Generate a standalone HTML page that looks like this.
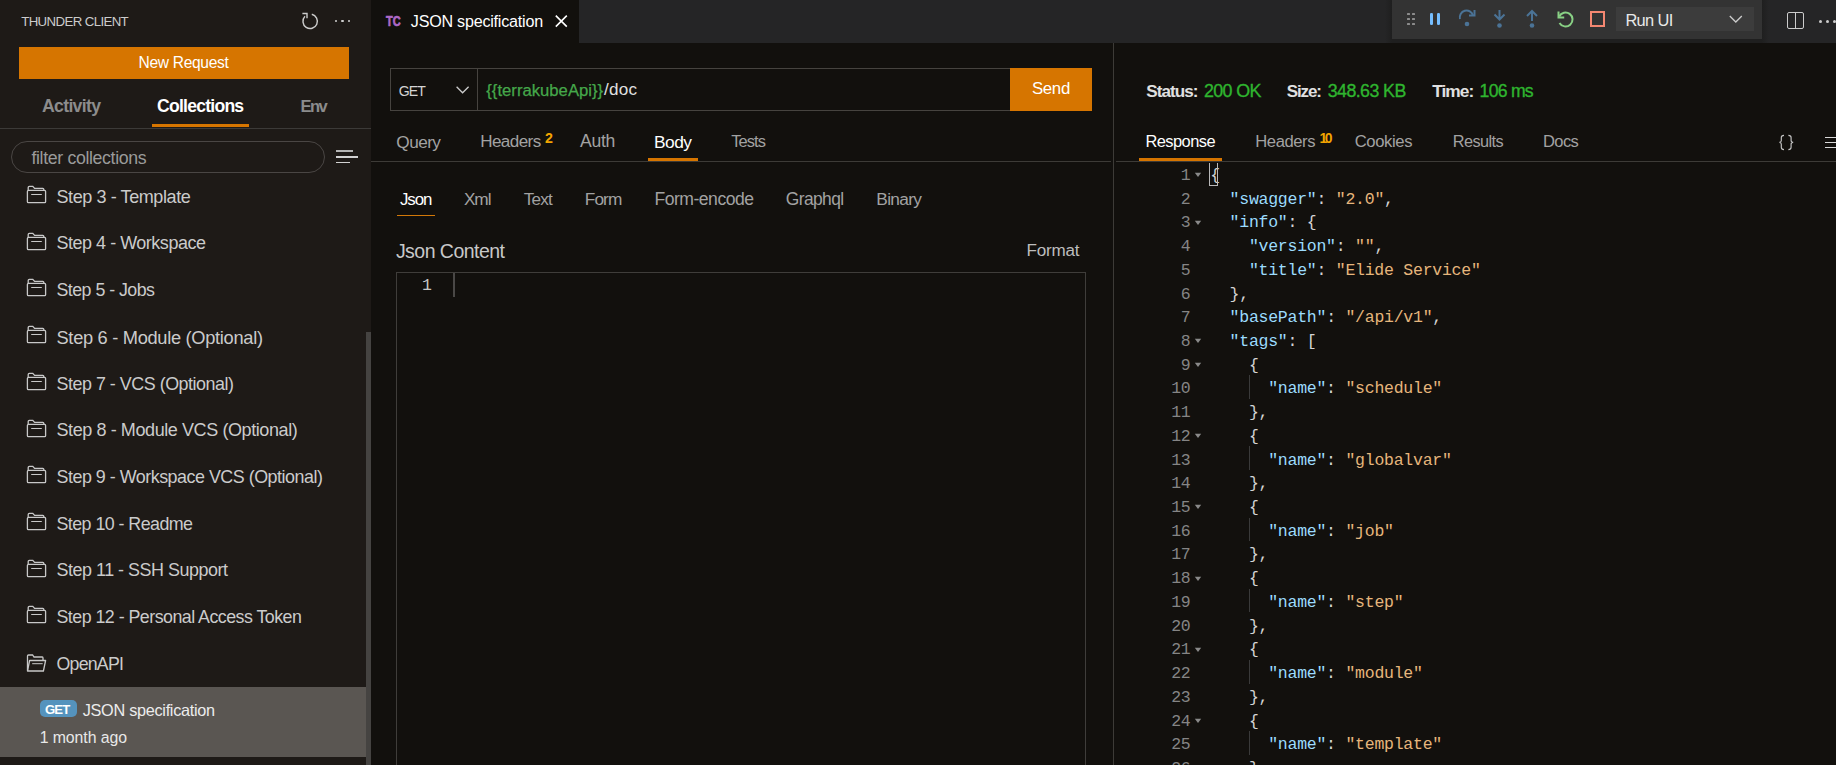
<!DOCTYPE html><html><head><meta charset="utf-8"><style>
html,body{margin:0;padding:0;width:1836px;height:765px;overflow:hidden;background:#12100d}
.t{position:absolute;white-space:pre;font-family:"Liberation Sans",sans-serif;line-height:normal}
.m{position:absolute;white-space:pre;font-family:"Liberation Mono",monospace}
.r{position:absolute;box-sizing:content-box}
</style></head><body>
<div class="r" style="left:0px;top:0px;width:371px;height:765px;background:#1e1a17;"></div>
<div class="r" style="left:371px;top:0px;width:1465px;height:765px;background:#12100d;"></div>
<div class="r" style="left:579px;top:0px;width:1257px;height:43px;background:#252526;"></div>
<div class="t" style="left:21.20px;top:13.89px;font-size:13.27px;letter-spacing:-0.629px;color:#cccccc;font-weight:400;">THUNDER CLIENT</div>
<div class="r" style="left:19px;top:47px;width:330px;height:32px;background:#d67500;"></div>
<div class="t" style="left:138.60px;top:54.00px;font-size:15.58px;letter-spacing:-0.333px;color:#ffffff;font-weight:400;">New Request</div>
<div class="t" style="left:42.00px;top:95.99px;font-size:17.69px;letter-spacing:-0.698px;color:#8c8c8c;font-weight:700;">Activity</div>
<div class="t" style="left:157.10px;top:95.97px;font-size:17.60px;letter-spacing:-0.776px;color:#ffffff;font-weight:700;">Collections</div>
<div class="t" style="left:300.50px;top:97.02px;font-size:16.55px;letter-spacing:-1.524px;color:#8c8c8c;font-weight:700;">Env</div>
<div class="r" style="left:152px;top:124px;width:97px;height:3px;background:#d67500;"></div>
<div class="r" style="left:0px;top:128px;width:371px;height:1px;background:#3c3a38;"></div>
<div class="r" style="left:11px;top:141px;width:312px;height:30px;border:1px solid #4a4644;border-radius:16px"></div>
<div class="t" style="left:31.40px;top:147.75px;font-size:17.74px;letter-spacing:-0.349px;color:#9a9a9a;font-weight:400;">filter collections</div>
<div class="r" style="left:336.2px;top:150px;width:16.8px;height:2px;background:#b4b4b4"></div>
<div class="r" style="left:336.2px;top:156.2px;width:21.6px;height:1.7px;background:#d2d2d2"></div>
<div class="r" style="left:336.2px;top:161.7px;width:13.8px;height:1.7px;background:#d2d2d2"></div>
<div class="t" style="left:56.50px;top:186.68px;font-size:18.04px;letter-spacing:-0.420px;color:#cbcbcb;font-weight:400;">Step 3 - Template</div>
<svg class="r" style="left:20px;top:180.00px" width="36" height="30" viewBox="0 0 36 30"><path d="M8.2 10 V7.5 Q8.2 6.4 9.3 6.4 H12.8 L14.6 8.4 H22.8 Q23.8 8.4 23.8 9.6 V10" fill="none" stroke="#c8c8c8" stroke-width="1.3"/><rect x="7.4" y="10.4" width="18.2" height="12.3" rx="1" fill="none" stroke="#c8c8c8" stroke-width="1.3"/><path d="M11.2 14.5 H21.8" stroke="#c8c8c8" stroke-width="1"/></svg>
<div class="t" style="left:56.50px;top:233.43px;font-size:17.98px;letter-spacing:-0.473px;color:#cbcbcb;font-weight:400;">Step 4 - Workspace</div>
<svg class="r" style="left:20px;top:226.70px" width="36" height="30" viewBox="0 0 36 30"><path d="M8.2 10 V7.5 Q8.2 6.4 9.3 6.4 H12.8 L14.6 8.4 H22.8 Q23.8 8.4 23.8 9.6 V10" fill="none" stroke="#c8c8c8" stroke-width="1.3"/><rect x="7.4" y="10.4" width="18.2" height="12.3" rx="1" fill="none" stroke="#c8c8c8" stroke-width="1.3"/><path d="M11.2 14.5 H21.8" stroke="#c8c8c8" stroke-width="1"/></svg>
<div class="t" style="left:56.50px;top:280.29px;font-size:17.81px;letter-spacing:-0.535px;color:#cbcbcb;font-weight:400;">Step 5 - Jobs</div>
<svg class="r" style="left:20px;top:273.40px" width="36" height="30" viewBox="0 0 36 30"><path d="M8.2 10 V7.5 Q8.2 6.4 9.3 6.4 H12.8 L14.6 8.4 H22.8 Q23.8 8.4 23.8 9.6 V10" fill="none" stroke="#c8c8c8" stroke-width="1.3"/><rect x="7.4" y="10.4" width="18.2" height="12.3" rx="1" fill="none" stroke="#c8c8c8" stroke-width="1.3"/><path d="M11.2 14.5 H21.8" stroke="#c8c8c8" stroke-width="1"/></svg>
<div class="t" style="left:56.50px;top:326.58px;font-size:18.25px;letter-spacing:-0.302px;color:#cbcbcb;font-weight:400;">Step 6 - Module (Optional)</div>
<svg class="r" style="left:20px;top:320.10px" width="36" height="30" viewBox="0 0 36 30"><path d="M8.2 10 V7.5 Q8.2 6.4 9.3 6.4 H12.8 L14.6 8.4 H22.8 Q23.8 8.4 23.8 9.6 V10" fill="none" stroke="#c8c8c8" stroke-width="1.3"/><rect x="7.4" y="10.4" width="18.2" height="12.3" rx="1" fill="none" stroke="#c8c8c8" stroke-width="1.3"/><path d="M11.2 14.5 H21.8" stroke="#c8c8c8" stroke-width="1"/></svg>
<div class="t" style="left:56.50px;top:373.60px;font-size:17.90px;letter-spacing:-0.477px;color:#cbcbcb;font-weight:400;">Step 7 - VCS (Optional)</div>
<svg class="r" style="left:20px;top:366.80px" width="36" height="30" viewBox="0 0 36 30"><path d="M8.2 10 V7.5 Q8.2 6.4 9.3 6.4 H12.8 L14.6 8.4 H22.8 Q23.8 8.4 23.8 9.6 V10" fill="none" stroke="#c8c8c8" stroke-width="1.3"/><rect x="7.4" y="10.4" width="18.2" height="12.3" rx="1" fill="none" stroke="#c8c8c8" stroke-width="1.3"/><path d="M11.2 14.5 H21.8" stroke="#c8c8c8" stroke-width="1"/></svg>
<div class="t" style="left:56.50px;top:420.18px;font-size:18.03px;letter-spacing:-0.417px;color:#cbcbcb;font-weight:400;">Step 8 - Module VCS (Optional)</div>
<svg class="r" style="left:20px;top:413.50px" width="36" height="30" viewBox="0 0 36 30"><path d="M8.2 10 V7.5 Q8.2 6.4 9.3 6.4 H12.8 L14.6 8.4 H22.8 Q23.8 8.4 23.8 9.6 V10" fill="none" stroke="#c8c8c8" stroke-width="1.3"/><rect x="7.4" y="10.4" width="18.2" height="12.3" rx="1" fill="none" stroke="#c8c8c8" stroke-width="1.3"/><path d="M11.2 14.5 H21.8" stroke="#c8c8c8" stroke-width="1"/></svg>
<div class="t" style="left:56.50px;top:467.00px;font-size:17.90px;letter-spacing:-0.491px;color:#cbcbcb;font-weight:400;">Step 9 - Workspace VCS (Optional)</div>
<svg class="r" style="left:20px;top:460.20px" width="36" height="30" viewBox="0 0 36 30"><path d="M8.2 10 V7.5 Q8.2 6.4 9.3 6.4 H12.8 L14.6 8.4 H22.8 Q23.8 8.4 23.8 9.6 V10" fill="none" stroke="#c8c8c8" stroke-width="1.3"/><rect x="7.4" y="10.4" width="18.2" height="12.3" rx="1" fill="none" stroke="#c8c8c8" stroke-width="1.3"/><path d="M11.2 14.5 H21.8" stroke="#c8c8c8" stroke-width="1"/></svg>
<div class="t" style="left:56.50px;top:513.74px;font-size:17.86px;letter-spacing:-0.562px;color:#cbcbcb;font-weight:400;">Step 10 - Readme</div>
<svg class="r" style="left:20px;top:506.90px" width="36" height="30" viewBox="0 0 36 30"><path d="M8.2 10 V7.5 Q8.2 6.4 9.3 6.4 H12.8 L14.6 8.4 H22.8 Q23.8 8.4 23.8 9.6 V10" fill="none" stroke="#c8c8c8" stroke-width="1.3"/><rect x="7.4" y="10.4" width="18.2" height="12.3" rx="1" fill="none" stroke="#c8c8c8" stroke-width="1.3"/><path d="M11.2 14.5 H21.8" stroke="#c8c8c8" stroke-width="1"/></svg>
<div class="t" style="left:56.50px;top:560.36px;font-size:17.94px;letter-spacing:-0.483px;color:#cbcbcb;font-weight:400;">Step 11 - SSH Support</div>
<svg class="r" style="left:20px;top:553.60px" width="36" height="30" viewBox="0 0 36 30"><path d="M8.2 10 V7.5 Q8.2 6.4 9.3 6.4 H12.8 L14.6 8.4 H22.8 Q23.8 8.4 23.8 9.6 V10" fill="none" stroke="#c8c8c8" stroke-width="1.3"/><rect x="7.4" y="10.4" width="18.2" height="12.3" rx="1" fill="none" stroke="#c8c8c8" stroke-width="1.3"/><path d="M11.2 14.5 H21.8" stroke="#c8c8c8" stroke-width="1"/></svg>
<div class="t" style="left:56.50px;top:607.17px;font-size:17.82px;letter-spacing:-0.524px;color:#cbcbcb;font-weight:400;">Step 12 - Personal Access Token</div>
<svg class="r" style="left:20px;top:600.30px" width="36" height="30" viewBox="0 0 36 30"><path d="M8.2 10 V7.5 Q8.2 6.4 9.3 6.4 H12.8 L14.6 8.4 H22.8 Q23.8 8.4 23.8 9.6 V10" fill="none" stroke="#c8c8c8" stroke-width="1.3"/><rect x="7.4" y="10.4" width="18.2" height="12.3" rx="1" fill="none" stroke="#c8c8c8" stroke-width="1.3"/><path d="M11.2 14.5 H21.8" stroke="#c8c8c8" stroke-width="1"/></svg>
<div class="t" style="left:56.50px;top:653.92px;font-size:17.76px;letter-spacing:-0.765px;color:#cbcbcb;font-weight:400;">OpenAPI</div>
<svg class="r" style="left:20px;top:647.00px" width="36" height="30" viewBox="0 0 36 30"><path d="M7.5 23.5 V9 Q7.5 8 8.5 8 H12.6 L14 10 H22.3 Q23 10 23 11 V13.5" fill="none" stroke="#c8c8c8" stroke-width="1.3"/><path d="M9.6 13.5 H25.6 L23.4 24 H7.5 Z" fill="none" stroke="#c8c8c8" stroke-width="1.3" stroke-linejoin="round"/><path d="M12.2 16.7 H22.7" stroke="#c8c8c8" stroke-width="1"/></svg>
<div class="r" style="left:366px;top:332px;width:5px;height:433px;background:#454341;"></div>
<div class="r" style="left:0px;top:687px;width:366px;height:70px;background:#5a5652;"></div>
<div class="r" style="left:40px;top:700px;width:37px;height:17px;background:#5593bd;border-radius:5px"></div>
<div class="t" style="left:45.00px;top:702.02px;font-size:13.13px;letter-spacing:-0.847px;color:#ffffff;font-weight:700;">GET</div>
<div class="t" style="left:82.70px;top:700.57px;font-size:16.27px;letter-spacing:-0.292px;color:#ececec;font-weight:400;">JSON specification</div>
<div class="t" style="left:39.70px;top:729.25px;font-size:15.85px;letter-spacing:-0.075px;color:#e8e8e8;font-weight:400;">1 month ago</div>
<div class="t" style="left:410.80px;top:12.21px;font-size:16.12px;letter-spacing:-0.223px;color:#ffffff;font-weight:400;">JSON specification</div>
<div class="t" style="left:386px;top:11.8px;font-size:15.3px;font-weight:700;color:#ad68c6;transform:scaleX(0.72);transform-origin:left top;letter-spacing:0px;-webkit-text-stroke:0.7px #ad68c6">TC</div>
<svg class="r" style="left:550px;top:10px" width="24" height="22" viewBox="0 0 24 22"><path d="M5.8 5.6 L16.8 16.6 M16.8 5.6 L5.8 16.6" stroke="#ffffff" stroke-width="1.6"/></svg>
<div class="r" style="left:390px;top:68px;width:619px;height:41px;border:1px solid #46433f;border-right:none"></div>
<div class="r" style="left:477px;top:69px;width:1px;height:41px;background:#46433f;"></div>
<div class="t" style="left:398.80px;top:82.74px;font-size:14.10px;letter-spacing:-0.895px;color:#d4d4d4;font-weight:400;">GET</div>
<svg class="r" style="left:452px;top:82px" width="20" height="16" viewBox="0 0 20 16"><path d="M4.6 4.8 L10.6 10.8 L16.6 4.8" fill="none" stroke="#cccccc" stroke-width="1.3"/></svg>
<div class="t" style="left:486.30px;top:80.68px;font-size:16.71px;letter-spacing:-0.004px;color:#45a84a;font-weight:400;-webkit-text-stroke:0.25px #45a84a">{{terrakubeApi}}</div>
<div class="t" style="left:604.00px;top:80.34px;font-size:17.09px;letter-spacing:0.235px;color:#e0e0e0;font-weight:400;">/doc</div>
<div class="r" style="left:1010px;top:68px;width:82px;height:43px;background:#d67500;"></div>
<div class="t" style="left:1031.90px;top:78.63px;font-size:16.87px;letter-spacing:-0.331px;color:#ffffff;font-weight:400;">Send</div>
<div class="r" style="left:1113px;top:43px;width:1px;height:722px;background:#3d3b37;"></div>
<div class="t" style="left:396.30px;top:131.62px;font-size:17.22px;letter-spacing:-0.547px;color:#a2a2a2;font-weight:400;">Query</div>
<div class="t" style="left:480.20px;top:131.74px;font-size:17.08px;letter-spacing:-0.594px;color:#a2a2a2;font-weight:400;">Headers</div>
<div class="t" style="left:580.00px;top:131.28px;font-size:17.59px;letter-spacing:-0.296px;color:#a2a2a2;font-weight:400;">Auth</div>
<div class="t" style="left:654.00px;top:131.50px;font-size:17.35px;letter-spacing:-0.512px;color:#ffffff;font-weight:400;">Body</div>
<div class="t" style="left:731.20px;top:132.30px;font-size:16.47px;letter-spacing:-0.908px;color:#a2a2a2;font-weight:400;">Tests</div>
<div class="t" style="left:545.00px;top:130.04px;font-size:14.21px;letter-spacing:-0.400px;color:#f2a500;font-weight:700;">2</div>
<div class="r" style="left:648px;top:158px;width:50px;height:3px;background:#d67500;"></div>
<div class="r" style="left:371px;top:161px;width:740px;height:1px;background:#3d3b37;"></div>
<div class="t" style="left:400.00px;top:189.73px;font-size:16.88px;letter-spacing:-1.114px;color:#ffffff;font-weight:400;">Json</div>
<div class="t" style="left:463.90px;top:189.39px;font-size:17.24px;letter-spacing:-1.047px;color:#a2a2a2;font-weight:400;">Xml</div>
<div class="t" style="left:523.80px;top:189.49px;font-size:17.14px;letter-spacing:-0.809px;color:#a2a2a2;font-weight:400;">Text</div>
<div class="t" style="left:584.80px;top:189.37px;font-size:17.27px;letter-spacing:-0.928px;color:#a2a2a2;font-weight:400;">Form</div>
<div class="t" style="left:654.50px;top:189.08px;font-size:17.60px;letter-spacing:-0.514px;color:#a2a2a2;font-weight:400;">Form-encode</div>
<div class="t" style="left:785.70px;top:189.19px;font-size:17.46px;letter-spacing:-0.590px;color:#a2a2a2;font-weight:400;">Graphql</div>
<div class="t" style="left:876.30px;top:189.35px;font-size:17.29px;letter-spacing:-0.663px;color:#a2a2a2;font-weight:400;">Binary</div>
<div class="r" style="left:397px;top:214.6px;width:38px;height:1.7px;background:#d27808"></div>
<div class="t" style="left:395.90px;top:239.55px;font-size:19.50px;letter-spacing:-0.531px;color:#c8c8c8;font-weight:400;">Json Content</div>
<div class="t" style="left:1026.50px;top:240.53px;font-size:17.09px;letter-spacing:-0.224px;color:#bdbdbd;font-weight:400;">Format</div>
<div class="r" style="left:396px;top:272px;width:688px;height:500px;border:1px solid #3f3d3a"></div>
<div class="m" style="left:422px;top:276.4px;font-size:16.5px;color:#c6c6c6">1</div>
<div class="r" style="left:453px;top:273px;width:2px;height:24px;background:#4a4846;"></div>
<div class="t" style="left:1146.30px;top:81.53px;font-size:17.09px;letter-spacing:-0.937px;color:#e0e0e0;font-weight:700;">Status:</div>
<div class="t" style="left:1203.90px;top:80.82px;font-size:17.88px;letter-spacing:-0.588px;color:#2fb52f;font-weight:400;-webkit-text-stroke:0.35px #2fb52f">200 OK</div>
<div class="t" style="left:1286.70px;top:81.67px;font-size:16.94px;letter-spacing:-1.058px;color:#e0e0e0;font-weight:700;">Size:</div>
<div class="t" style="left:1327.80px;top:80.91px;font-size:17.78px;letter-spacing:-0.566px;color:#2fb52f;font-weight:400;-webkit-text-stroke:0.35px #2fb52f">348.63 KB</div>
<div class="t" style="left:1432.20px;top:81.32px;font-size:17.32px;letter-spacing:-0.946px;color:#e0e0e0;font-weight:700;">Time:</div>
<div class="t" style="left:1479.60px;top:81.05px;font-size:17.62px;letter-spacing:-0.738px;color:#2fb52f;font-weight:400;-webkit-text-stroke:0.35px #2fb52f">106 ms</div>
<div class="t" style="left:1145.40px;top:132.02px;font-size:16.44px;letter-spacing:-0.549px;color:#ffffff;font-weight:400;">Response</div>
<div class="t" style="left:1255.30px;top:131.87px;font-size:16.61px;letter-spacing:-0.432px;color:#a2a2a2;font-weight:400;">Headers</div>
<div class="t" style="left:1354.70px;top:131.83px;font-size:16.65px;letter-spacing:-0.391px;color:#a2a2a2;font-weight:400;">Cookies</div>
<div class="t" style="left:1452.70px;top:132.15px;font-size:16.30px;letter-spacing:-0.556px;color:#a2a2a2;font-weight:400;">Results</div>
<div class="t" style="left:1543.00px;top:131.96px;font-size:16.51px;letter-spacing:-0.600px;color:#a2a2a2;font-weight:400;">Docs</div>
<div class="t" style="left:1319.40px;top:130.45px;font-size:13.87px;letter-spacing:-2.321px;color:#f2a500;font-weight:700;">10</div>
<div class="r" style="left:1139px;top:158px;width:83px;height:3px;background:#d67500;"></div>
<div class="r" style="left:1116px;top:161px;width:720px;height:1px;background:#3d3b37;"></div>
<svg class="r" style="left:1776px;top:132px" width="22" height="20" viewBox="1776 132 22 20"><path d="M1784 135.3 Q1781.3 135.3 1781.3 137.6 V140.6 Q1781.3 142.4 1779.4 142.4 Q1781.3 142.4 1781.3 144.2 V147.3 Q1781.3 149.6 1784 149.6 M1788.4 135.3 Q1791.1 135.3 1791.1 137.6 V140.6 Q1791.1 142.4 1793.2 142.4 Q1791.1 142.4 1791.1 144.2 V147.3 Q1791.1 149.6 1788.4 149.6" fill="none" stroke="#c4c4c4" stroke-width="1.15"/></svg>
<div class="r" style="left:1825px;top:137px;width:11px;height:1px;background:#d8d8d8;"></div>
<div class="r" style="left:1825px;top:142px;width:11px;height:1px;background:#d8d8d8;"></div>
<div class="r" style="left:1825px;top:147px;width:11px;height:1px;background:#d8d8d8;"></div>
<div class="m" style="left:1100px;width:90.5px;text-align:right;top:165.96px;font-size:16.5px;letter-spacing:-0.25px;color:#858585">1</div>
<svg class="r" style="left:1194px;top:172.40px" width="8" height="6" viewBox="0 0 8 6"><path d="M0.8 0.8 H7.2 L4 5 Z" fill="#8a8a8a"/></svg>
<div class="m" style="left:1210.30px;top:165.96px;font-size:16.5px;letter-spacing:-0.25px"><span style="color:#d4d4d4">{</span></div>
<div class="m" style="left:1100px;width:90.5px;text-align:right;top:189.68px;font-size:16.5px;letter-spacing:-0.25px;color:#858585">2</div>
<div class="m" style="left:1229.60px;top:189.68px;font-size:16.5px;letter-spacing:-0.25px"><span style="color:#9cdcfe">&quot;swagger&quot;</span><span style="color:#d4d4d4">: </span><span style="color:#e6b67c">&quot;2.0&quot;</span><span style="color:#d4d4d4">,</span></div>
<div class="m" style="left:1100px;width:90.5px;text-align:right;top:213.40px;font-size:16.5px;letter-spacing:-0.25px;color:#858585">3</div>
<svg class="r" style="left:1194px;top:219.84px" width="8" height="6" viewBox="0 0 8 6"><path d="M0.8 0.8 H7.2 L4 5 Z" fill="#8a8a8a"/></svg>
<div class="m" style="left:1229.60px;top:213.40px;font-size:16.5px;letter-spacing:-0.25px"><span style="color:#9cdcfe">&quot;info&quot;</span><span style="color:#d4d4d4">: </span><span style="color:#d4d4d4">{</span></div>
<div class="m" style="left:1100px;width:90.5px;text-align:right;top:237.12px;font-size:16.5px;letter-spacing:-0.25px;color:#858585">4</div>
<div class="m" style="left:1248.90px;top:237.12px;font-size:16.5px;letter-spacing:-0.25px"><span style="color:#9cdcfe">&quot;version&quot;</span><span style="color:#d4d4d4">: </span><span style="color:#e6b67c">&quot;&quot;</span><span style="color:#d4d4d4">,</span></div>
<div class="m" style="left:1100px;width:90.5px;text-align:right;top:260.84px;font-size:16.5px;letter-spacing:-0.25px;color:#858585">5</div>
<div class="m" style="left:1248.90px;top:260.84px;font-size:16.5px;letter-spacing:-0.25px"><span style="color:#9cdcfe">&quot;title&quot;</span><span style="color:#d4d4d4">: </span><span style="color:#e6b67c">&quot;Elide Service&quot;</span><span style="color:#d4d4d4"></span></div>
<div class="m" style="left:1100px;width:90.5px;text-align:right;top:284.56px;font-size:16.5px;letter-spacing:-0.25px;color:#858585">6</div>
<div class="m" style="left:1229.60px;top:284.56px;font-size:16.5px;letter-spacing:-0.25px"><span style="color:#d4d4d4">},</span></div>
<div class="m" style="left:1100px;width:90.5px;text-align:right;top:308.28px;font-size:16.5px;letter-spacing:-0.25px;color:#858585">7</div>
<div class="m" style="left:1229.60px;top:308.28px;font-size:16.5px;letter-spacing:-0.25px"><span style="color:#9cdcfe">&quot;basePath&quot;</span><span style="color:#d4d4d4">: </span><span style="color:#e6b67c">&quot;/api/v1&quot;</span><span style="color:#d4d4d4">,</span></div>
<div class="m" style="left:1100px;width:90.5px;text-align:right;top:332.00px;font-size:16.5px;letter-spacing:-0.25px;color:#858585">8</div>
<svg class="r" style="left:1194px;top:338.44px" width="8" height="6" viewBox="0 0 8 6"><path d="M0.8 0.8 H7.2 L4 5 Z" fill="#8a8a8a"/></svg>
<div class="m" style="left:1229.60px;top:332.00px;font-size:16.5px;letter-spacing:-0.25px"><span style="color:#9cdcfe">&quot;tags&quot;</span><span style="color:#d4d4d4">: </span><span style="color:#d4d4d4">[</span></div>
<div class="m" style="left:1100px;width:90.5px;text-align:right;top:355.72px;font-size:16.5px;letter-spacing:-0.25px;color:#858585">9</div>
<svg class="r" style="left:1194px;top:362.16px" width="8" height="6" viewBox="0 0 8 6"><path d="M0.8 0.8 H7.2 L4 5 Z" fill="#8a8a8a"/></svg>
<div class="m" style="left:1248.90px;top:355.72px;font-size:16.5px;letter-spacing:-0.25px"><span style="color:#d4d4d4">{</span></div>
<div class="m" style="left:1100px;width:90.5px;text-align:right;top:379.44px;font-size:16.5px;letter-spacing:-0.25px;color:#858585">10</div>
<div class="r" style="left:1249px;top:375px;width:1px;height:24px;background:#3a3a3a;"></div>
<div class="m" style="left:1268.20px;top:379.44px;font-size:16.5px;letter-spacing:-0.25px"><span style="color:#9cdcfe">&quot;name&quot;</span><span style="color:#d4d4d4">: </span><span style="color:#e6b67c">&quot;schedule&quot;</span><span style="color:#d4d4d4"></span></div>
<div class="m" style="left:1100px;width:90.5px;text-align:right;top:403.16px;font-size:16.5px;letter-spacing:-0.25px;color:#858585">11</div>
<div class="m" style="left:1248.90px;top:403.16px;font-size:16.5px;letter-spacing:-0.25px"><span style="color:#d4d4d4">},</span></div>
<div class="m" style="left:1100px;width:90.5px;text-align:right;top:426.88px;font-size:16.5px;letter-spacing:-0.25px;color:#858585">12</div>
<svg class="r" style="left:1194px;top:433.32px" width="8" height="6" viewBox="0 0 8 6"><path d="M0.8 0.8 H7.2 L4 5 Z" fill="#8a8a8a"/></svg>
<div class="m" style="left:1248.90px;top:426.88px;font-size:16.5px;letter-spacing:-0.25px"><span style="color:#d4d4d4">{</span></div>
<div class="m" style="left:1100px;width:90.5px;text-align:right;top:450.60px;font-size:16.5px;letter-spacing:-0.25px;color:#858585">13</div>
<div class="r" style="left:1249px;top:446px;width:1px;height:24px;background:#3a3a3a;"></div>
<div class="m" style="left:1268.20px;top:450.60px;font-size:16.5px;letter-spacing:-0.25px"><span style="color:#9cdcfe">&quot;name&quot;</span><span style="color:#d4d4d4">: </span><span style="color:#e6b67c">&quot;globalvar&quot;</span><span style="color:#d4d4d4"></span></div>
<div class="m" style="left:1100px;width:90.5px;text-align:right;top:474.32px;font-size:16.5px;letter-spacing:-0.25px;color:#858585">14</div>
<div class="m" style="left:1248.90px;top:474.32px;font-size:16.5px;letter-spacing:-0.25px"><span style="color:#d4d4d4">},</span></div>
<div class="m" style="left:1100px;width:90.5px;text-align:right;top:498.04px;font-size:16.5px;letter-spacing:-0.25px;color:#858585">15</div>
<svg class="r" style="left:1194px;top:504.48px" width="8" height="6" viewBox="0 0 8 6"><path d="M0.8 0.8 H7.2 L4 5 Z" fill="#8a8a8a"/></svg>
<div class="m" style="left:1248.90px;top:498.04px;font-size:16.5px;letter-spacing:-0.25px"><span style="color:#d4d4d4">{</span></div>
<div class="m" style="left:1100px;width:90.5px;text-align:right;top:521.76px;font-size:16.5px;letter-spacing:-0.25px;color:#858585">16</div>
<div class="r" style="left:1249px;top:518px;width:1px;height:23px;background:#3a3a3a;"></div>
<div class="m" style="left:1268.20px;top:521.76px;font-size:16.5px;letter-spacing:-0.25px"><span style="color:#9cdcfe">&quot;name&quot;</span><span style="color:#d4d4d4">: </span><span style="color:#e6b67c">&quot;job&quot;</span><span style="color:#d4d4d4"></span></div>
<div class="m" style="left:1100px;width:90.5px;text-align:right;top:545.48px;font-size:16.5px;letter-spacing:-0.25px;color:#858585">17</div>
<div class="m" style="left:1248.90px;top:545.48px;font-size:16.5px;letter-spacing:-0.25px"><span style="color:#d4d4d4">},</span></div>
<div class="m" style="left:1100px;width:90.5px;text-align:right;top:569.20px;font-size:16.5px;letter-spacing:-0.25px;color:#858585">18</div>
<svg class="r" style="left:1194px;top:575.64px" width="8" height="6" viewBox="0 0 8 6"><path d="M0.8 0.8 H7.2 L4 5 Z" fill="#8a8a8a"/></svg>
<div class="m" style="left:1248.90px;top:569.20px;font-size:16.5px;letter-spacing:-0.25px"><span style="color:#d4d4d4">{</span></div>
<div class="m" style="left:1100px;width:90.5px;text-align:right;top:592.92px;font-size:16.5px;letter-spacing:-0.25px;color:#858585">19</div>
<div class="r" style="left:1249px;top:589px;width:1px;height:23px;background:#3a3a3a;"></div>
<div class="m" style="left:1268.20px;top:592.92px;font-size:16.5px;letter-spacing:-0.25px"><span style="color:#9cdcfe">&quot;name&quot;</span><span style="color:#d4d4d4">: </span><span style="color:#e6b67c">&quot;step&quot;</span><span style="color:#d4d4d4"></span></div>
<div class="m" style="left:1100px;width:90.5px;text-align:right;top:616.64px;font-size:16.5px;letter-spacing:-0.25px;color:#858585">20</div>
<div class="m" style="left:1248.90px;top:616.64px;font-size:16.5px;letter-spacing:-0.25px"><span style="color:#d4d4d4">},</span></div>
<div class="m" style="left:1100px;width:90.5px;text-align:right;top:640.36px;font-size:16.5px;letter-spacing:-0.25px;color:#858585">21</div>
<svg class="r" style="left:1194px;top:646.80px" width="8" height="6" viewBox="0 0 8 6"><path d="M0.8 0.8 H7.2 L4 5 Z" fill="#8a8a8a"/></svg>
<div class="m" style="left:1248.90px;top:640.36px;font-size:16.5px;letter-spacing:-0.25px"><span style="color:#d4d4d4">{</span></div>
<div class="m" style="left:1100px;width:90.5px;text-align:right;top:664.08px;font-size:16.5px;letter-spacing:-0.25px;color:#858585">22</div>
<div class="r" style="left:1249px;top:660px;width:1px;height:24px;background:#3a3a3a;"></div>
<div class="m" style="left:1268.20px;top:664.08px;font-size:16.5px;letter-spacing:-0.25px"><span style="color:#9cdcfe">&quot;name&quot;</span><span style="color:#d4d4d4">: </span><span style="color:#e6b67c">&quot;module&quot;</span><span style="color:#d4d4d4"></span></div>
<div class="m" style="left:1100px;width:90.5px;text-align:right;top:687.80px;font-size:16.5px;letter-spacing:-0.25px;color:#858585">23</div>
<div class="m" style="left:1248.90px;top:687.80px;font-size:16.5px;letter-spacing:-0.25px"><span style="color:#d4d4d4">},</span></div>
<div class="m" style="left:1100px;width:90.5px;text-align:right;top:711.52px;font-size:16.5px;letter-spacing:-0.25px;color:#858585">24</div>
<svg class="r" style="left:1194px;top:717.96px" width="8" height="6" viewBox="0 0 8 6"><path d="M0.8 0.8 H7.2 L4 5 Z" fill="#8a8a8a"/></svg>
<div class="m" style="left:1248.90px;top:711.52px;font-size:16.5px;letter-spacing:-0.25px"><span style="color:#d4d4d4">{</span></div>
<div class="m" style="left:1100px;width:90.5px;text-align:right;top:735.24px;font-size:16.5px;letter-spacing:-0.25px;color:#858585">25</div>
<div class="r" style="left:1249px;top:731px;width:1px;height:24px;background:#3a3a3a;"></div>
<div class="m" style="left:1268.20px;top:735.24px;font-size:16.5px;letter-spacing:-0.25px"><span style="color:#9cdcfe">&quot;name&quot;</span><span style="color:#d4d4d4">: </span><span style="color:#e6b67c">&quot;template&quot;</span><span style="color:#d4d4d4"></span></div>
<div class="m" style="left:1100px;width:90.5px;text-align:right;top:758.96px;font-size:16.5px;letter-spacing:-0.25px;color:#858585">26</div>
<div class="m" style="left:1248.90px;top:758.96px;font-size:16.5px;letter-spacing:-0.25px"><span style="color:#d4d4d4">},</span></div>
<div class="m" style="left:1100px;width:90.5px;text-align:right;top:782.68px;font-size:16.5px;letter-spacing:-0.25px;color:#858585">27</div>
<div class="m" style="left:1248.90px;top:782.68px;font-size:16.5px;letter-spacing:-0.25px"><span style="color:#d4d4d4">},</span></div>
<div class="r" style="left:1209px;top:163px;width:6.6px;height:21.6px;border:1.1px solid #b8b8b8;border-top:none"></div>
<div class="r" style="left:1392px;top:39px;width:370px;height:4px;background:#1f1f1f;"></div>
<div class="r" style="left:1762px;top:0px;width:7px;height:43px;background:linear-gradient(to right,#1f1f1f,#252526);"></div>
<div class="r" style="left:1385px;top:0px;width:7px;height:43px;background:linear-gradient(to left,#1f1f1f,#252526);"></div>
<div class="r" style="left:1392px;top:0px;width:370px;height:39px;background:#333333;"></div>
<div class="r" style="left:1407px;top:12.7px;width:3px;height:2.4px;background:#8c8c8c;border-radius:0.5px"></div>
<div class="r" style="left:1407px;top:17.7px;width:3px;height:2.4px;background:#8c8c8c;border-radius:0.5px"></div>
<div class="r" style="left:1407px;top:22.8px;width:3px;height:2.4px;background:#8c8c8c;border-radius:0.5px"></div>
<div class="r" style="left:1412px;top:12.7px;width:3px;height:2.4px;background:#8c8c8c;border-radius:0.5px"></div>
<div class="r" style="left:1412px;top:17.7px;width:3px;height:2.4px;background:#8c8c8c;border-radius:0.5px"></div>
<div class="r" style="left:1412px;top:22.8px;width:3px;height:2.4px;background:#8c8c8c;border-radius:0.5px"></div>
<div class="r" style="left:1430px;top:12.7px;width:2.7px;height:12.4px;background:#75beff;border-radius:1.3px"></div>
<div class="r" style="left:1436.9px;top:12.7px;width:2.7px;height:12.4px;background:#75beff;border-radius:1.3px"></div>
<svg class="r" style="left:1455px;top:8px" width="24" height="22" viewBox="0 0 24 22"><path d="M5 11 A6.5 6.5 0 0 1 18 7.5" fill="none" stroke="#4b7396" stroke-width="2"/><path d="M14 7.5 H19.5 V2" fill="none" stroke="#4b7396" stroke-width="2"/><circle cx="12" cy="16" r="2.3" fill="#4b7396"/></svg>
<svg class="r" style="left:1488px;top:8px" width="24" height="22" viewBox="0 0 24 22"><path d="M11.5 2 V11 M6.5 6.5 L11.5 11.5 L16.5 6.5" fill="none" stroke="#4b7396" stroke-width="2"/><circle cx="11.5" cy="17.5" r="2.3" fill="#4b7396"/></svg>
<svg class="r" style="left:1520px;top:8px" width="24" height="22" viewBox="0 0 24 22"><path d="M12 13 V3 M7 8 L12 3 L17 8" fill="none" stroke="#4b7396" stroke-width="2"/><circle cx="12" cy="17.5" r="2.3" fill="#4b7396"/></svg>
<svg class="r" style="left:1553px;top:8px" width="24" height="22" viewBox="0 0 24 22"><path d="M6.2 8.5 A7 7 0 1 1 6.5 15" fill="none" stroke="#89d185" stroke-width="2"/><path d="M5.5 3.5 V9.5 H11.2" fill="none" stroke="#89d185" stroke-width="2"/></svg>
<div class="r" style="left:1589.5px;top:11.3px;width:11.6px;height:11.6px;border:2px solid #f48771"></div>
<div class="r" style="left:1616px;top:7px;width:138px;height:24px;background:#3c3c3c;"></div>
<div class="t" style="left:1625.40px;top:11.24px;font-size:16.42px;letter-spacing:-0.638px;color:#e8e8e8;font-weight:400;">Run UI</div>
<svg class="r" style="left:1726px;top:12px" width="20" height="14" viewBox="0 0 20 14"><path d="M3.8 4 L9.8 10 L15.8 4" fill="none" stroke="#cccccc" stroke-width="1.3"/></svg>
<div class="r" style="left:1787px;top:12px;width:14.5px;height:14.5px;border:1.2px solid #cccccc;border-radius:2px"></div>
<div class="r" style="left:1795px;top:12px;width:1px;height:16px;background:#cccccc;"></div>
<div class="r" style="left:1818.5px;top:19.5px;width:3px;height:3px;border-radius:50%;background:#cccccc"></div>
<div class="r" style="left:1826.0px;top:19.5px;width:3px;height:3px;border-radius:50%;background:#cccccc"></div>
<div class="r" style="left:1832.5px;top:19.5px;width:3px;height:3px;border-radius:50%;background:#cccccc"></div>
<svg class="r" style="left:298px;top:9px" width="24" height="24" viewBox="0 0 24 24"><path d="M13.8 5.3 A7.2 7.2 0 1 1 7 7.3" fill="none" stroke="#cccccc" stroke-width="1.4"/><path d="M4.4 4.5 H9 V9.3" fill="none" stroke="#cccccc" stroke-width="1.4"/></svg>
<div class="r" style="left:334.7px;top:19.7px;width:2.6px;height:2.6px;border-radius:50%;background:#d0d0d0"></div>
<div class="r" style="left:341.09999999999997px;top:19.7px;width:2.6px;height:2.6px;border-radius:50%;background:#d0d0d0"></div>
<div class="r" style="left:347.5px;top:19.7px;width:2.6px;height:2.6px;border-radius:50%;background:#d0d0d0"></div>
</body></html>
